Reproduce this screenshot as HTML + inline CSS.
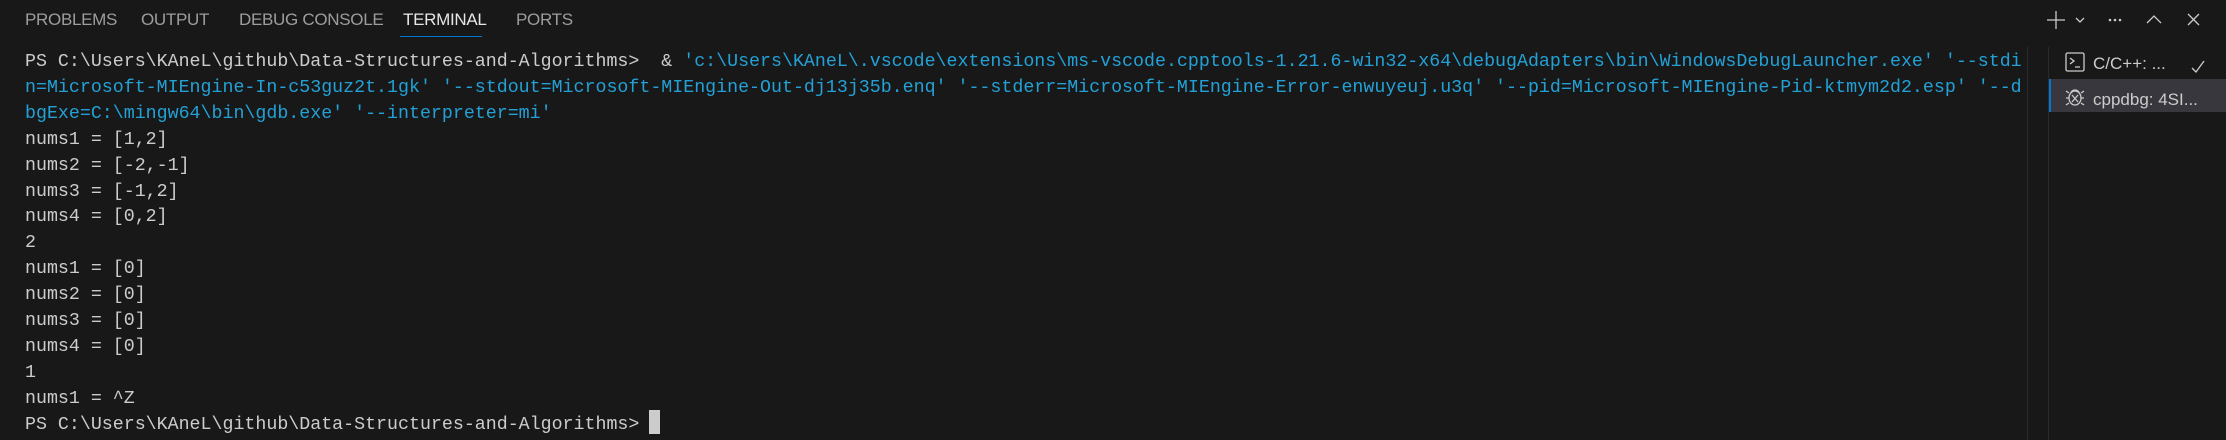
<!DOCTYPE html>
<html><head><meta charset="utf-8"><style>
body{margin:0;width:2226px;height:440px;background:#181818;overflow:hidden;position:relative;font-family:"Liberation Sans",sans-serif}
.tab{position:absolute;top:10px;font-size:17px;color:#9d9d9d;letter-spacing:-0.3px}
.term{position:absolute;left:25px;top:50px;font-family:"Liberation Mono",monospace;font-size:18.3px;line-height:25.9px;color:#cccccc;white-space:pre}
.b{color:#23a1d6}
</style></head><body>
<div class="tab" style="left:25px">PROBLEMS</div>
<div class="tab" style="left:141px">OUTPUT</div>
<div class="tab" style="left:239px">DEBUG CONSOLE</div>
<div class="tab" style="left:403px;color:#e7e7e7">TERMINAL</div>
<div class="tab" style="left:516px">PORTS</div>
<div style="position:absolute;left:400px;top:36px;width:82px;height:1px;background:#0078d4"></div>

<div class="term">PS C:\Users\KAneL\github\Data-Structures-and-Algorithms>  &amp; <span class="b">'c:\Users\KAneL\.vscode\extensions\ms-vscode.cpptools-1.21.6-win32-x64\debugAdapters\bin\WindowsDebugLauncher.exe' '--stdi</span>
<span class="b">n=Microsoft-MIEngine-In-c53guz2t.1gk' '--stdout=Microsoft-MIEngine-Out-dj13j35b.enq' '--stderr=Microsoft-MIEngine-Error-enwuyeuj.u3q' '--pid=Microsoft-MIEngine-Pid-ktmym2d2.esp' '--d</span>
<span class="b">bgExe=C:\mingw64\bin\gdb.exe' '--interpreter=mi'</span>
nums1 = [1,2]
nums2 = [-2,-1]
nums3 = [-1,2]
nums4 = [0,2]
2
nums1 = [0]
nums2 = [0]
nums3 = [0]
nums4 = [0]
1
nums1 = ^Z
PS C:\Users\KAneL\github\Data-Structures-and-Algorithms> </div>
<div style="position:absolute;left:649px;top:410px;width:11px;height:24px;background:#cccccc"></div>

<div style="position:absolute;left:2027px;top:47px;width:1px;height:393px;background:#2b2b2b"></div>
<div style="position:absolute;left:2048px;top:47px;width:1px;height:393px;background:#2b2b2b"></div>
<div style="position:absolute;left:2049px;top:79px;width:177px;height:33px;background:#37373d"></div>
<div style="position:absolute;left:2049px;top:79px;width:2px;height:33px;background:#0078d4"></div>

<svg style="position:absolute;left:0;top:0" width="2226" height="440">
<g stroke="#cccccc" fill="none" stroke-width="1.3">
<path d="M2047 20H2065M2056 11V29"/>
<path d="M2076 18l4 4 4-4"/>
<path d="M2147 23l7-7 7 7"/>
<path d="M2188 14l11 11M2199 14l-11 11"/>
<rect x="2066" y="53" width="18" height="18" rx="1.5"/>
<path d="M2070 58l4 3-4 3M2075 67h5"/>
<path d="M2192 68l4 4 8-11"/>
<ellipse cx="2075" cy="98" rx="6" ry="7"/>
<path d="M2071 93a4 3 0 0 1 8 0M2069 98h-3M2081 98h3M2069 93l-3-2M2081 93l3-2M2069 103l-3 2M2081 103l3 2M2072 95l6 7M2078 95l-6 7"/>
</g>
<g fill="#cccccc"><circle cx="2110" cy="20" r="1.3"/><circle cx="2115" cy="20" r="1.3"/><circle cx="2120" cy="20" r="1.3"/></g>
<text x="2093" y="69" fill="#cccccc" font-family="Liberation Sans" font-size="17">C/C++: ...</text>
<text x="2093" y="105" fill="#cccccc" font-family="Liberation Sans" font-size="17">cppdbg: 4SI...</text>
</svg>
</body></html>
